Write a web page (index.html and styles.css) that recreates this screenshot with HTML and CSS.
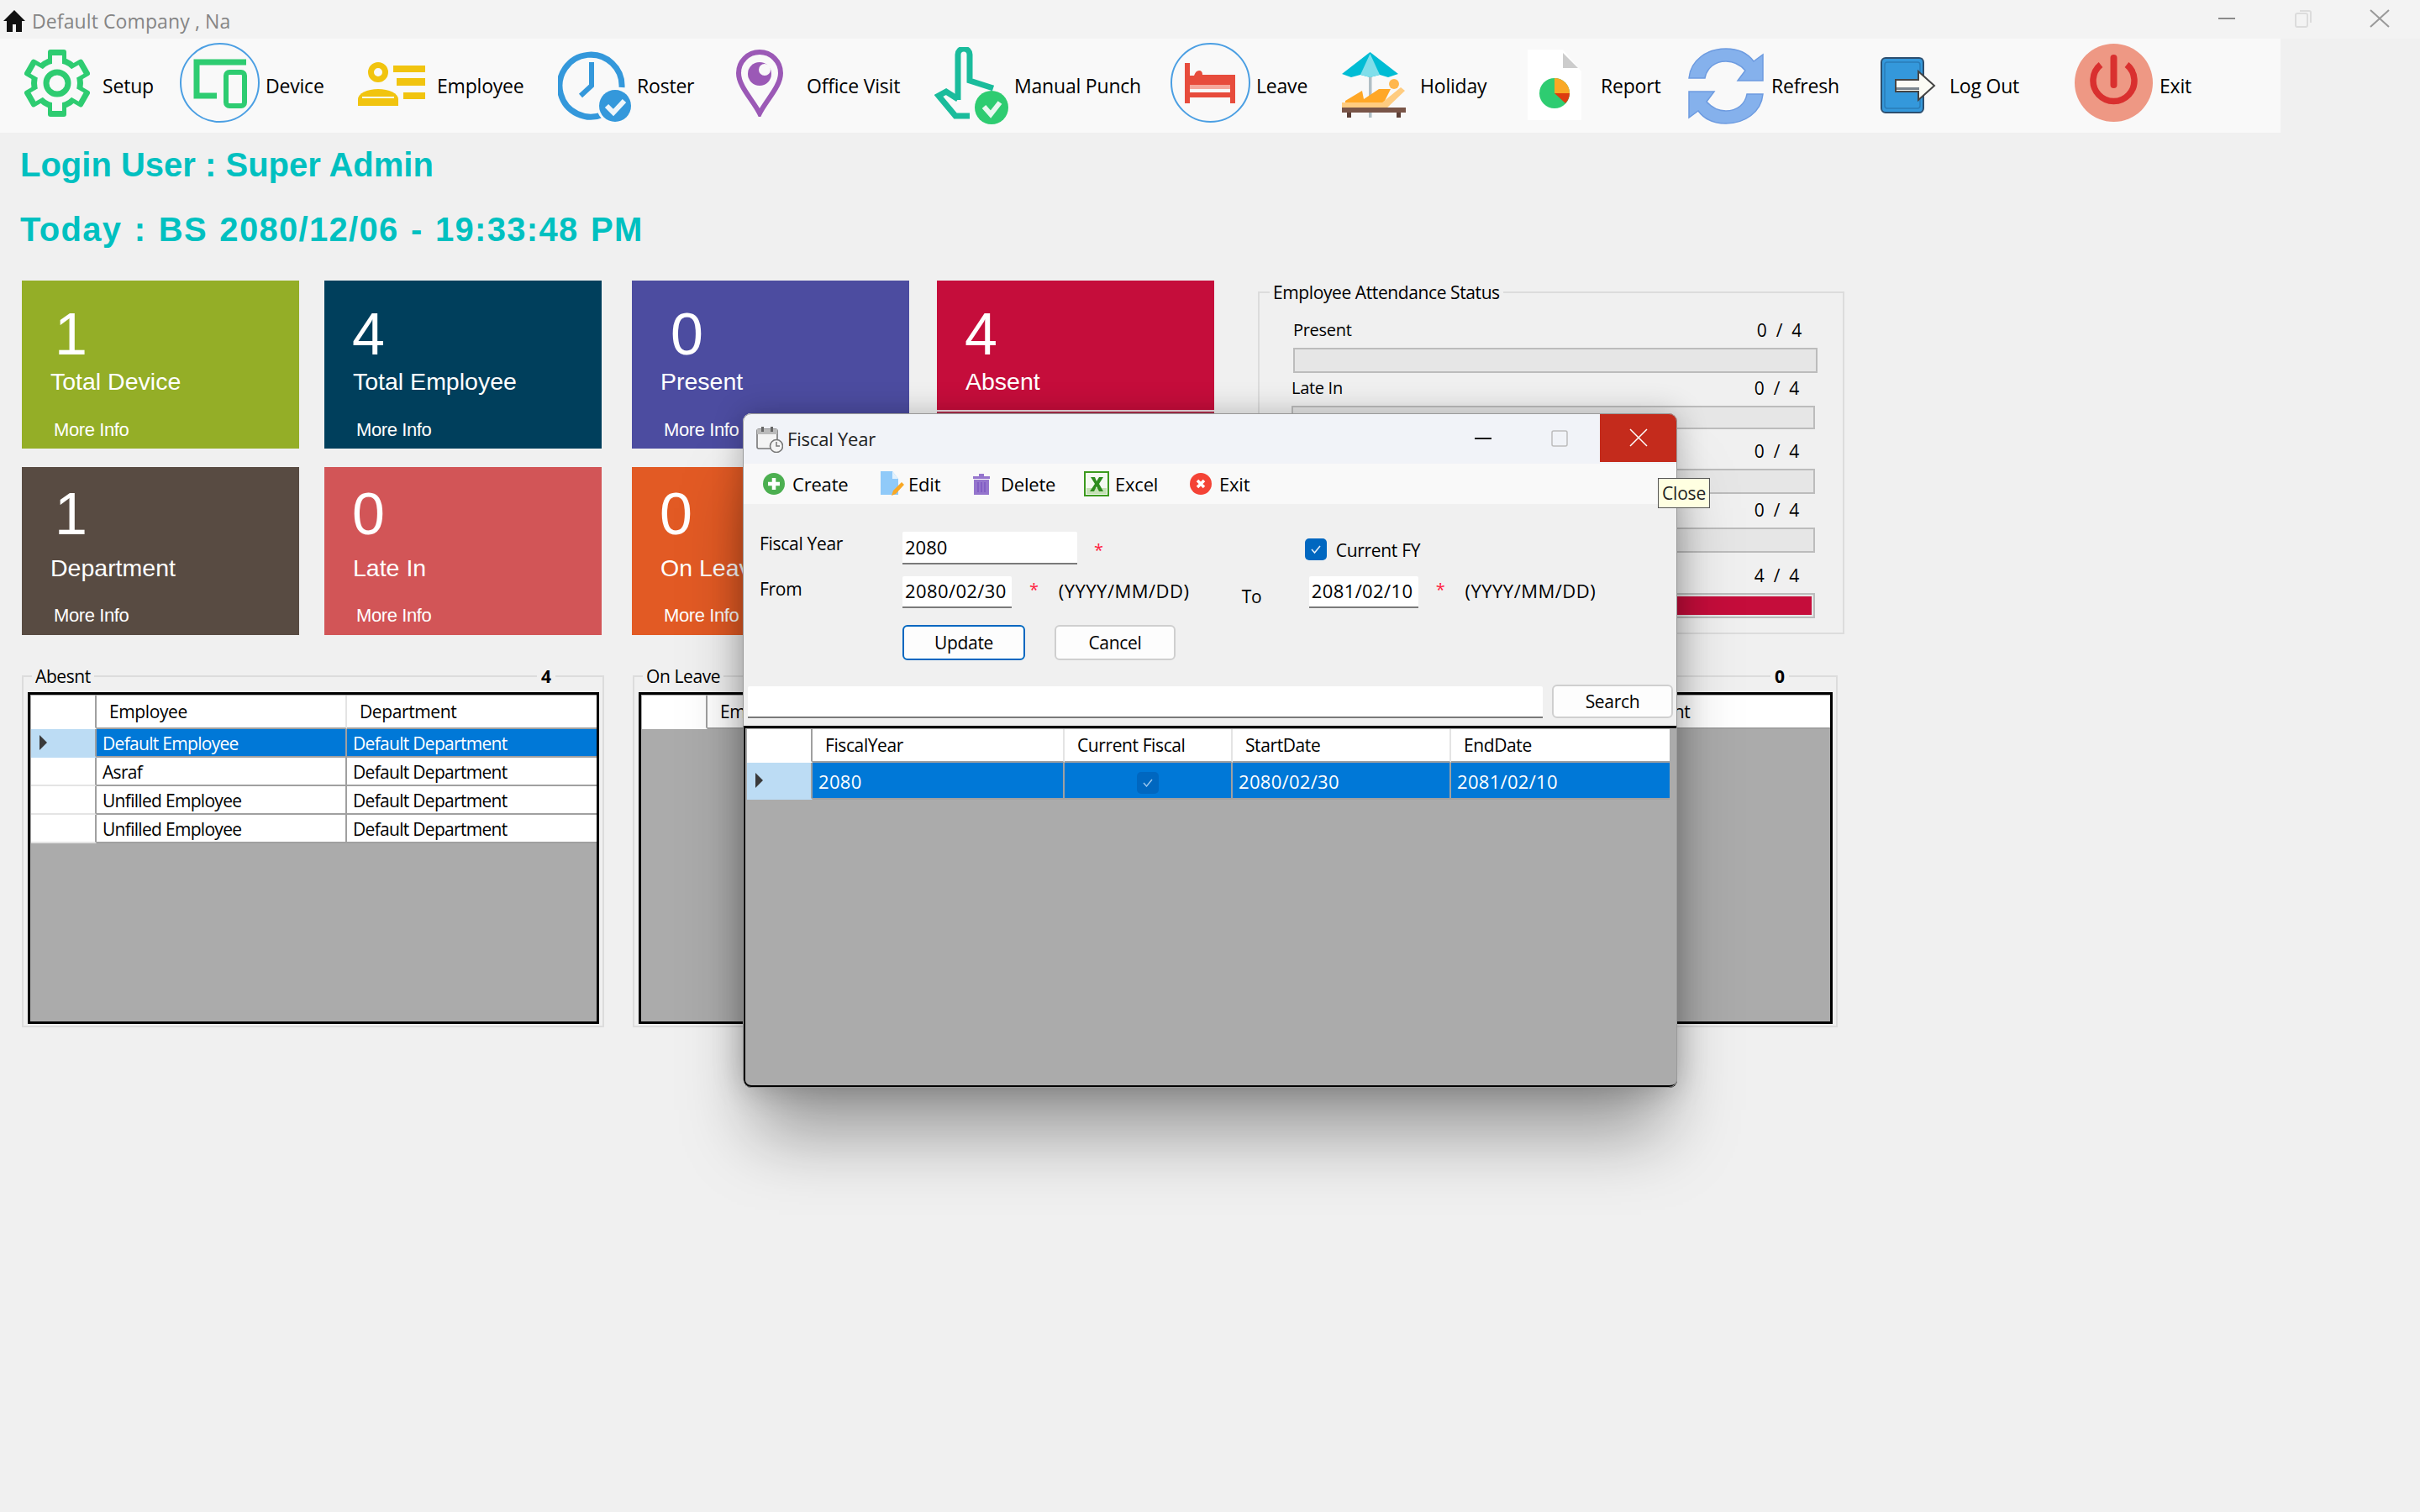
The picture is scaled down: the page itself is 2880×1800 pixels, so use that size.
FILE: index.html
```html
<!DOCTYPE html>
<html lang="en">
<head>
<meta charset="utf-8">
<title>Fiscal Year</title>
<link rel="stylesheet" href="styles.css">
</head>
<body>
<div class="app">
  <header class="titlebar">
    <svg class="home" viewBox="0 0 26 26"><path d="M13 0 L26 13 H22 V26 H15 V17 H11 V26 H4 V13 H0 Z" fill="#111"/></svg>
    <span class="app-title">Default Company , Na</span>
    <span class="win-controls">
      <svg class="wc" viewBox="0 0 24 24"><rect x="2" y="11" width="20" height="2" fill="#8a8a8a"/></svg>
      <svg class="wc" viewBox="0 0 24 24"><rect x="3" y="6" width="14" height="16" rx="2" fill="none" stroke="#dcdcdc" stroke-width="2"/><path d="M8 3 H19 Q21 3 21 5 V17" fill="none" stroke="#dcdcdc" stroke-width="2"/></svg>
      <svg class="wc" viewBox="0 0 24 24"><path d="M1 2 L23 22 M23 2 L1 22" stroke="#999" stroke-width="2"/></svg>
    </span>
  </header>

  <nav class="toolbar">
    <div class="tb tb-setup">
      <svg width="78" height="80" viewBox="0 0 78 80">
        <g fill="#2ecc71">
          <rect x="28" y="0" width="22" height="80" rx="3"/>
          <rect x="28" y="0" width="22" height="80" rx="3" transform="rotate(60 39 40)"/>
          <rect x="28" y="0" width="22" height="80" rx="3" transform="rotate(120 39 40)"/>
          <circle cx="39" cy="40" r="31"/>
        </g>
        <g fill="#f9f9f9">
          <rect x="33" y="7" width="12" height="66"/>
          <rect x="33" y="7" width="12" height="66" transform="rotate(60 39 40)"/>
          <rect x="33" y="7" width="12" height="66" transform="rotate(120 39 40)"/>
          <circle cx="39" cy="40" r="24"/>
        </g>
        <circle cx="39" cy="40" r="13" fill="none" stroke="#2ecc71" stroke-width="7"/>
      </svg>
      <span>Setup</span>
    </div>
    <div class="tb tb-device">
      <svg width="95" height="95" viewBox="0 0 95 95">
        <circle cx="47.500" cy="47.500" r="46.500" fill="none" stroke="#4b9fe3" stroke-width="2"/>
        <path d="M79 23 H20 V63 H44" fill="none" stroke="#2ecc71" stroke-width="7"/>
        <rect x="55" y="35" width="22" height="40" rx="4" fill="none" stroke="#2ecc71" stroke-width="6"/>
      </svg>
      <span>Device</span>
    </div>
    <div class="tb tb-employee">
      <svg width="80" height="52" viewBox="0 0 80 52">
        <circle cx="24" cy="12" r="8.500" fill="none" stroke="#f1c40f" stroke-width="7"/>
        <path d="M0 52 V44 A24 12 0 0 1 48 44 V52 Z" fill="#f1c40f"/>
        <rect x="5" y="41" width="38" height="2" fill="#f9f9f9"/>
        <rect x="42" y="4" width="38" height="8" fill="#f1c40f"/>
        <rect x="46" y="19" width="34" height="9" fill="#f1c40f"/>
        <rect x="54" y="36" width="26" height="8" fill="#f1c40f"/>
      </svg>
      <span>Employee</span>
    </div>
    <div class="tb tb-roster">
      <svg width="88" height="89" viewBox="0 0 88 89">
        <path d="M54 78 A37 37 0 1 1 76 46" fill="none" stroke="#3498db" stroke-width="7"/>
        <path d="M40 16 V44 L27 56" fill="none" stroke="#3498db" stroke-width="6"/>
        <circle cx="68" cy="68" r="22" fill="#f9f9f9"/>
        <circle cx="68" cy="68" r="19" fill="#3498db"/>
        <path d="M58 68 L66 76 L79 62" fill="none" stroke="#eef6fb" stroke-width="6"/>
      </svg>
      <span>Roster</span>
    </div>
    <div class="tb tb-visit">
      <svg width="56" height="80" viewBox="0 0 56 80">
        <path d="M28 76 C20 60 3 44 3 28 A25 25 0 0 1 53 28 C53 44 36 60 28 76 Z" fill="none" stroke="#9b59b6" stroke-width="6"/>
        <circle cx="28" cy="29" r="14" fill="#9b59b6"/>
        <circle cx="34" cy="24" r="7" fill="#f9f9f9"/>
      </svg>
      <span>Office Visit</span>
    </div>
    <div class="tb tb-punch">
      <svg width="88" height="92" viewBox="0 0 88 92">
        <path d="M28 63 V9 A7 7 0 0 1 42 9 V40 L70 49" fill="none" stroke="#1abc9c" stroke-width="7"/>
        <path d="M28 62 L14 53 L5 58 L25 82 H42" fill="none" stroke="#1abc9c" stroke-width="7"/>
        <circle cx="68" cy="72" r="20" fill="#2ecc71"/>
        <path d="M59 71 L67 80 L78 66" fill="none" stroke="#e8f8ef" stroke-width="6"/>
      </svg>
      <span>Manual Punch</span>
    </div>
    <div class="tb tb-leave">
      <svg width="95" height="95" viewBox="0 0 95 95">
        <circle cx="47.500" cy="47.500" r="46.500" fill="none" stroke="#4b9fe3" stroke-width="2"/>
        <g fill="#e74c3c">
          <rect x="17" y="24" width="6" height="48"/>
          <rect x="71" y="38" width="6" height="34"/>
          <rect x="17" y="59" width="60" height="6"/>
          <path d="M23 39 H28 Q30 33 34 33 Q38 33 38 38 H71 V51 H23 Z"/>
        </g>
        <rect x="23" y="50" width="48" height="5" fill="#f5a89c"/>
      </svg>
      <span>Leave</span>
    </div>
    <div class="tb tb-holiday">
      <svg width="76" height="78" viewBox="0 0 76 78">
        <rect x="32" y="24" width="3.500" height="54" fill="#b0bec5"/>
        <path d="M33.500 0 L67 26 L55 30 L45 27 L33.500 30 L22 27 L11 30 L0 26 Z" fill="#00bcd4"/>
        <path d="M33.500 2 L45 27 L33.500 30 L22 27 Z" fill="#80deea"/>
        <circle cx="62" cy="38" r="6" fill="#ffb74d"/>
        <path d="M4 58 L24 46 L26 56 L44 44 L58 44 L50 60 H4 Z" fill="#ffa726"/>
        <path d="M0 60 H48 L70 42 L75 46 L52 68 H0 Z" fill="#ffcc80"/>
        <rect x="0" y="66" width="76" height="6" fill="#795548"/>
        <rect x="6" y="72" width="5" height="7" fill="#5d4037"/>
        <rect x="65" y="72" width="5" height="7" fill="#5d4037"/>
      </svg>
      <span>Holiday</span>
    </div>
    <div class="tb tb-report">
      <svg width="64" height="84" viewBox="0 0 64 84">
        <path d="M0 0 H42 L64 26 V84 H0 Z" fill="#fff"/>
        <path d="M42 4 L60 22 H42 Z" fill="#ccc"/>
        <circle cx="32" cy="52" r="18" fill="#2ecc71"/>
        <path d="M32 34 A18 18 0 0 1 50 52 H32 Z" fill="#f9a825"/>
        <path d="M32 52 H50 A18 18 0 0 1 45 64 Z" fill="#dd3c10"/>
      </svg>
      <span>Report</span>
    </div>
    <div class="tb tb-refresh">
      <svg width="92" height="91" viewBox="0 0 92 91">
        <path d="M2 36 C4 14 24 1 46 1 C60 1 71 5 79 16 L90 8 V39 H60 L69 27 C63 20 55 16 46 16 C33 16 23 24 21 36 Z" fill="#85b1ec" stroke="#6d9be0" stroke-width="1.500"/>
        <path d="M2 36 C4 14 24 1 46 1 C60 1 71 5 79 16 L90 8 V39 H60 L69 27 C63 20 55 16 46 16 C33 16 23 24 21 36 Z" fill="#85b1ec" stroke="#6d9be0" stroke-width="1.500" transform="rotate(180 46 45.500)"/>
      </svg>
      <span>Refresh</span>
    </div>
    <div class="tb tb-logout">
      <svg width="66" height="67" viewBox="0 0 66 67">
        <rect x="1" y="1" width="50" height="65" rx="5" fill="#3498db" stroke="#2c4f70" stroke-width="2"/>
        <rect x="5" y="6" width="42" height="55" rx="3" fill="none" stroke="#2a7cb8" stroke-width="1.500"/>
        <path d="M18 27 H45 V17 L64 34 L45 51 V41 H18 Z" fill="#fbfbf4" stroke="#444" stroke-width="2"/>
        <rect x="19" y="36" width="27" height="3" fill="#7a858d"/>
      </svg>
      <span>Log Out</span>
    </div>
    <div class="tb tb-exit">
      <svg width="93" height="95" viewBox="0 0 93 95">
        <circle cx="46.500" cy="47.500" r="46.500" fill="#ee9884"/>
        <path d="M31 26 A24.500 24.500 0 1 0 62 26" fill="none" stroke="#d9302f" stroke-width="7.500"/>
        <path d="M46.500 18 V50" stroke="#d9302f" stroke-width="8" stroke-linecap="round"/>
      </svg>
      <span>Exit</span>
    </div>
  </nav>

  <h1 class="headline headline-user">Login User : Super Admin</h1>
  <h2 class="headline headline-today">Today : BS 2080/12/06 - 19:33:48 PM</h2>

  <section class="dashboard">
    <div class="cards">
      <article class="card c-olive"><b class="num num-one">1</b><span class="lbl">Total Device</span><a class="more">More Info</a></article>
      <article class="card c-navy"><b class="num">4</b><span class="lbl">Total Employee</span><a class="more">More Info</a></article>
      <article class="card c-purple"><b class="num num-in">0</b><span class="lbl">Present</span><a class="more">More Info</a></article>
      <article class="card c-crimson"><b class="num">4</b><span class="lbl">Absent</span></article>
      <article class="card low c-brown"><b class="num num-one">1</b><span class="lbl">Department</span><a class="more">More Info</a></article>
      <article class="card low c-coral"><b class="num">0</b><span class="lbl">Late In</span><a class="more">More Info</a></article>
      <article class="card low c-orange"><b class="num">0</b><span class="lbl">On Leave</span><a class="more">More Info</a></article>
      <article class="card low c-teal"></article>
    </div>
    <fieldset class="status">
      <legend>Employee Attendance Status</legend>
      <div class="st-row"><div class="st-head"><span>Present</span><span class="st-val">0 / 4</span></div><div class="bar"></div></div>
      <div class="st-row"><div class="st-head"><span>Late In</span><span class="st-val">0 / 4</span></div><div class="bar"></div></div>
      <div class="st-row"><div class="st-head"><span></span><span class="st-val">0 / 4</span></div><div class="bar"></div></div>
      <div class="st-row"><div class="st-head"><span></span><span class="st-val">0 / 4</span></div><div class="bar"></div></div>
      <div class="st-row"><div class="st-head"><span></span><span class="st-val">4 / 4</span></div><div class="bar"><div class="fill"></div></div></div>
    </fieldset>
  </section>

  <section class="lists">
    <fieldset class="list">
      <legend>Abesnt</legend><strong class="count">4</strong>
      <div class="grid">
        <table>
          <colgroup><col class="w-rh"><col class="w-a"><col class="w-b"></colgroup>
          <thead><tr><th class="rh"></th><th>Employee</th><th>Department</th></tr></thead>
          <tbody>
            <tr class="sel"><td class="rh"><i class="caret"></i></td><td>Default Employee</td><td>Default Department</td></tr>
            <tr><td class="rh"></td><td>Asraf</td><td>Default Department</td></tr>
            <tr><td class="rh"></td><td>Unfilled Employee</td><td>Default Department</td></tr>
            <tr><td class="rh"></td><td>Unfilled Employee</td><td>Default Department</td></tr>
          </tbody>
        </table>
      </div>
    </fieldset>
    <fieldset class="list">
      <legend>On Leave</legend>
      <div class="grid">
        <table>
          <colgroup><col class="w-rh"><col class="w-a"><col class="w-b"></colgroup>
          <thead><tr><th class="rh"></th><th>Employee</th><th></th></tr></thead>
        </table>
      </div>
    </fieldset>
    <fieldset class="list">
      <legend>&nbsp;</legend><strong class="count">0</strong>
      <div class="grid">
        <table>
          <colgroup><col class="w-rh"><col class="w-a"><col class="w-b"></colgroup>
          <thead><tr><th class="rh"></th><th></th><th>Department</th></tr></thead>
        </table>
      </div>
    </fieldset>
  </section>
</div>

<div class="dialog">
  <header class="dlg-title">
    <svg class="dlg-icon" width="32" height="32" viewBox="0 0 32 32">
      <rect x="1" y="4" width="24" height="23" rx="2" fill="#f4f4f4" stroke="#777" stroke-width="1.600"/>
      <rect x="1" y="4" width="24" height="6" fill="#bbb"/>
      <rect x="6" y="1" width="3" height="6" fill="#666"/><rect x="17" y="1" width="3" height="6" fill="#666"/>
      <circle cx="24" cy="24" r="7.500" fill="#f4f4f4" stroke="#777" stroke-width="1.600"/>
      <path d="M24 19 V24 H28" fill="none" stroke="#777" stroke-width="1.500"/>
    </svg>
    <span class="dlg-name">Fiscal Year</span>
    <svg class="dlg-min" width="20" height="4" viewBox="0 0 20 4"><rect y="1" width="20" height="2" fill="#111"/></svg>
    <svg class="dlg-max" width="20" height="20" viewBox="0 0 20 20"><rect x="1" y="1" width="18" height="18" rx="2" fill="none" stroke="#bdbdbd" stroke-width="1.500"/></svg>
    <span class="dlg-close"><svg width="24" height="22" viewBox="0 0 24 22"><path d="M2 1 L22 21 M22 1 L2 21" stroke="#fff" stroke-width="1.500"/></svg></span>
  </header>
  <nav class="dlg-tools">
    <span class="dt dt-create"><svg width="26" height="26" viewBox="0 0 26 26"><circle cx="13" cy="13" r="13" fill="#4caf50"/><path d="M13 6 V20 M6 13 H20" stroke="#fff" stroke-width="4.500"/></svg>Create</span>
    <span class="dt dt-edit"><svg width="28" height="30" viewBox="0 0 28 30"><path d="M0 0 H14 L21 9 V28 H0 Z" fill="#90caf9"/><path d="M14 0 L21 9 H14 Z" fill="#e3f2fd"/><path d="M13 29 L15 23 L25 13 L28 16 L18 27 Z" fill="#f9a825"/></svg>Edit</span>
    <span class="dt dt-delete"><svg width="20" height="26" viewBox="0 0 20 26"><path d="M0 4 H7 V1 H13 V4 H20 V7 H0 Z" fill="#9575cd"/><path d="M1 8 H19 V26 H1 Z" fill="#9575cd"/><path d="M6 11 V23 M10 11 V23 M14 11 V23" stroke="#7e57c2" stroke-width="1.500"/></svg>Delete</span>
    <span class="dt dt-excel"><svg width="30" height="30" viewBox="0 0 30 30"><rect x="1" y="1" width="28" height="28" fill="#f4f9f1" stroke="#3c9a1e" stroke-width="2"/><rect x="3" y="20" width="24" height="7" fill="#c5e1b5"/><path d="M8 7 H13 L15 12 L18 7 H23 L18 15 L23 24 H18 L15 18 L12 24 H7 L13 15 Z" fill="#2e8b1e"/></svg>Excel</span>
    <span class="dt dt-exit"><svg width="26" height="26" viewBox="0 0 26 26"><circle cx="13" cy="13" r="13" fill="#f44336"/><path d="M9 9 L17 17 M17 9 L9 17" stroke="#fff" stroke-width="3.500"/></svg>Exit</span>
  </nav>
  <form class="dlg-form">
    <div class="f-row f-row1">
      <label class="f-label">Fiscal Year</label>
      <div class="txt txt-wide">2080</div>
      <span class="star star1">*</span>
      <span class="chk"><svg width="14" height="12" viewBox="0 0 14 12"><path d="M2 6 L5.500 10 L12 2" fill="none" stroke="#e6f0fa" stroke-width="1.500"/></svg></span>
      <span class="chk-label">Current FY</span>
    </div>
    <div class="f-row f-row2">
      <label class="f-label">From</label>
      <div class="txt txt-date">2080/02/30</div>
      <span class="star star2">*</span>
      <span class="fmt">(YYYY/MM/DD)</span>
      <span class="to">To</span>
      <div class="txt txt-date">2081/02/10</div>
      <span class="star star2">*</span>
      <span class="fmt">(YYYY/MM/DD)</span>
    </div>
    <div class="f-row f-row3">
      <button type="button" class="btn btn-primary">Update</button>
      <button type="button" class="btn btn-plain">Cancel</button>
    </div>
    <div class="f-search">
      <div class="txt txt-search"></div>
      <button type="button" class="btn btn-search">Search</button>
    </div>
  </form>
  <div class="grid grid-dlg">
    <table>
      <colgroup><col class="d-rh"><col class="d-a"><col class="d-b"><col class="d-c"><col class="d-d"></colgroup>
      <thead><tr><th class="rh"></th><th>FiscalYear</th><th>Current Fiscal</th><th>StartDate</th><th>EndDate</th></tr></thead>
      <tbody>
        <tr class="sel"><td class="rh"><i class="caret"></i></td><td>2080</td><td class="mid"><span class="cell-chk"><svg width="12" height="10" viewBox="0 0 12 10"><path d="M1 5 L4.500 9 L11 1" fill="none" stroke="#9cc8ee" stroke-width="1.400"/></svg></span></td><td>2080/02/30</td><td>2081/02/10</td></tr>
      </tbody>
    </table>
  </div>
</div>
<div class="tooltip">Close</div>
</body>
</html>
```
FILE: styles.css
```css
* { box-sizing: border-box; }
html, body { margin: 0; height: 1800px; overflow: hidden; }
body { position: relative; background: #f0f0f0; color: #000; font-family: "Open Sans", "Noto Sans", sans-serif; font-size: 21px; }
.app { display: flex; flex-direction: column; height: 1800px; }

.titlebar { flex: none; height: 46px; background: #f3f3f3; display: flex; align-items: center; padding-left: 4px; }
.home { width: 26px; height: 26px; margin-top: 4px; }
.app-title { margin-left: 8px; color: #858585; font-size: 23px; margin-top: 4px; letter-spacing: .1px; }
.win-controls { margin-left: auto; margin-right: 36px; display: flex; gap: 67px; margin-top: -2px; }
.wc { width: 24px; height: 24px; }

.toolbar { flex: none; width: 2714px; height: 112px; background: #f9f9f9; display: flex; align-items: center; padding-left: 29px; }
.tb { display: flex; align-items: center; flex: none; font-size: 23px; letter-spacing: -.2px; }
.tb span { display: block; }
.tb-setup { width: 185px; } .tb-setup svg { margin-top: -6px; } .tb-setup span { margin-left: 15px; }
.tb-device { width: 212px; } .tb-device svg { margin-top: -7px; } .tb-device span { margin-left: 7px; }
.tb-employee { width: 238px; } .tb-employee svg { margin-top: -5px; } .tb-employee span { margin-left: 14px; }
.tb-roster { width: 212px; } .tb-roster span { margin-left: 6px; }
.tb-visit { width: 236px; } .tb-visit svg { margin-top: -6px; } .tb-visit span { margin-left: 28px; }
.tb-punch { width: 281px; } .tb-punch span { margin-left: 7px; }
.tb-leave { width: 204px; } .tb-leave svg { margin-top: -7px; } .tb-leave span { margin-left: 7px; }
.tb-holiday { width: 221px; } .tb-holiday svg { margin-top: -3px; } .tb-holiday span { margin-left: 17px; }
.tb-report { width: 190px; } .tb-report svg { margin-top: -2px; } .tb-report span { margin-left: 23px; }
.tb-refresh { width: 230px; } .tb-refresh svg { margin-top: 1px; } .tb-refresh span { margin-left: 8px; }
.tb-logout { width: 231px; } .tb-logout svg { margin-top: -1px; } .tb-logout span { margin-left: 16px; }
.tb-exit svg { margin-top: -7px; } .tb-exit span { margin-left: 8px; }

.headline { margin: 0; padding-left: 24px; font-family: "Liberation Sans", Arial, sans-serif; font-weight: 700; font-size: 40px; line-height: 48px; color: #00c0c0; }
.headline-user { margin-top: 14px; }
.headline-today { margin-top: 29px; letter-spacing: 1.3px; word-spacing: 2px; }

.dashboard { flex: none; display: flex; margin: 37px 0 0 26px; }
.cards { display: grid; grid-template-columns: repeat(4, 330px); grid-auto-rows: 200px; column-gap: 33px; row-gap: 22px; }
.card { display: flex; flex-direction: column; color: #fff; font-family: "Liberation Sans", Arial, sans-serif; padding-left: 34px; }
.cards .card:nth-child(2), .cards .card:nth-child(6) { margin-left: -3px; margin-right: 3px; }
.num { font-weight: 400; font-size: 70px; line-height: 70px; margin-top: 29px; margin-left: -1px; }
.low .num { margin-top: 21px; }
.num-one { margin-left: 5px; }
.num-in { margin-left: 12px; }
.lbl { font-size: 28.500px; line-height: 34px; margin-top: 4px; height: 34px; }
.low .lbl { margin-top: 12px; }
.more { font-size: 22px; line-height: 26px; margin-top: 28px; margin-left: 4px; letter-spacing: -.4px; }
.low .more { margin-top: 27px; }
.c-olive { background: #94ae27; }
.c-navy { background: #003f5c; }
.c-purple { background: #4c4ca0; }
.c-crimson { background: linear-gradient(#c50d3b 154px, #f0d8df 154px, #f0d8df 156px, #b0304f 156px); }
.c-brown { background: #584b42; }
.c-coral { background: #d25557; }
.c-orange { background: #e25a24; }
.c-teal { background: #1a8f8a; }

fieldset { margin: 0; border: 2px solid #dcdcdc; min-width: 0; }
legend { padding: 0 4px; line-height: 28px; font-size: 21px; letter-spacing: -.4px; }

.status { width: 698px; height: 421px; margin: 0 0 0 52px; padding: 16px 30px 0 40px; }
.status legend { margin-left: -28px; }
.st-head { display: flex; justify-content: space-between; padding-right: 19px; line-height: 30px; letter-spacing: -.3px; font-size: 20px; }
.st-val { font-size: 21px; word-spacing: 6px; }
.bar { height: 30px; margin-top: 6px; border: 2px solid #bcbcbc; background: #e6e6e6; padding: 2px; }
.fill { height: 100%; background: #c50d3b; }
.st-row:nth-child(3) { margin: 3px 3px 0 -2px; }
.st-row:nth-child(3) .bar { height: 28px; }
.st-row:nth-child(4) { margin: 11px 3px 0 -2px; }
.st-row:nth-child(5) { margin: 4px 3px 0 -2px; }
.st-row:nth-child(6) { margin: 12px 3px 0 -2px; }

.lists { flex: none; display: flex; margin: 35px 0 0 26px; }
.list { position: relative; width: 693px; height: 432px; padding: 5px 4px 2px 5px; }
.list:nth-child(2) { margin-left: 34px; }
.list:nth-child(3) { margin-left: 48px; }
.list legend { margin-left: 5px; }
.count { position: absolute; right: 56px; top: -28px; padding: 0 5px; line-height: 28px; background: #f0f0f0; font-size: 21px; }

.grid { height: 395px; background: #ababab; border: 3px solid #000; padding: 1px 0 0 1px; overflow: hidden; }
table { border-collapse: separate; border-spacing: 0; table-layout: fixed; }
.w-rh { width: 78px; } .w-a { width: 298px; } .w-b { width: 297px; }
th, td { padding: 0; font-weight: 400; text-align: left; font-size: 21px; letter-spacing: -.7px; background: #fff; white-space: nowrap; overflow: hidden; }
th { height: 40px; padding-left: 15px; border-right: 2px solid #e4e4e4; border-bottom: 2px solid #a0a0a0; letter-spacing: -.4px; }
td { height: 34px; padding: 1px 0 0 7px; border-right: 2px solid #a0a0a0; border-bottom: 2px solid #a0a0a0; }
th:last-child, td:last-child { border-right: 0; }
.rh { padding: 0; border-right: 2px solid #a0a0a0; border-bottom: 2px solid #e4e4e4; }
th.rh { border-bottom-color: #fff; }
.sel td { background: #0078d7; color: #fff; }
.sel td.rh { background: #bcdcf4; border-bottom-color: #bcdcf4; }
.caret { display: block; width: 0; height: 0; margin-left: 10px; border-left: 9px solid #3a3a3a; border-top: 9px solid transparent; border-bottom: 9px solid transparent; }

.dialog { position: absolute; left: 884px; top: 492px; width: 1112px; height: 803px; display: flex; flex-direction: column; background: #f0f0f0; border-radius: 10px; outline: 1px solid #9a9a9a; outline-offset: -1px; box-shadow: 0 70px 80px -15px rgba(0,0,0,.36), 0 0 36px rgba(0,0,0,.24); }
.dlg-title { flex: none; height: 60px; background: #f1f3f8; display: flex; align-items: center; padding-left: 16px; border-radius: 10px 10px 0 0; }
.dlg-icon { margin-top: 2px; }
.dlg-name { flex: 1; margin-left: 5px; font-size: 22px; letter-spacing: -.2px; color: #222; }
.dlg-min { margin-right: 71px; }
.dlg-max { margin-right: 38px; }
.dlg-close { align-self: flex-start; width: 92px; height: 58px; background: #c42b1c; display: flex; align-items: center; justify-content: center; border-radius: 0 10px 0 0; }
.dlg-tools { flex: none; height: 48px; background: #f9f9f9; display: flex; align-items: center; padding-left: 24px; font-size: 22px; letter-spacing: -.2px; }
.dt { display: flex; align-items: center; flex: none; }
.dt-create { width: 140px; gap: 9px; }
.dt-edit { width: 110px; gap: 5px; }
.dt-delete { width: 132px; gap: 13px; }
.dt-excel { width: 126px; gap: 7px; }
.dt-exit { gap: 9px; }

.dlg-form { flex: none; height: 264px; font-size: 21px; letter-spacing: -.3px; display: flex; flex-direction: column; }
.f-row { display: flex; align-items: center; padding-left: 20px; }
.f-row1 { height: 39px; margin-top: 33px; }
.f-row2 { height: 38px; margin-top: 14px; }
.f-row3 { height: 42px; margin-top: 20px; padding-left: 190px; }
.f-label { width: 170px; flex: none; margin-top: -12px; }
.f-row2 .f-label { margin-top: -8px; }
.txt { background: #fff; border-bottom: 2px solid #7a7a7a; flex: none; padding-left: 3px; line-height: 36px; border-radius: 2px 2px 0 0; font-size: 22px; letter-spacing: .4px; }
.txt-wide { width: 208px; height: 39px; letter-spacing: 0; }
.txt-date { width: 130px; height: 38px; line-height: 34px; }
.star { color: #ff2040; font-size: 20px; flex: none; line-height: 20px; }
.star1 { margin-left: 20px; margin-top: 4px; }
.star2 { margin-left: 21px; margin-top: -6px; }
.f-row2 .fmt { margin-left: 24px; flex: none; width: 156px; margin-top: -4px; font-size: 22px; letter-spacing: .5px; }
.to { margin-left: 62px; width: 80px; flex: none; margin-top: 10px; }
.chk { margin-left: 240px; flex: none; width: 26px; height: 26px; border-radius: 5px; background: #0067c0; display: flex; align-items: center; justify-content: center; margin-top: 2px; }
.chk-label { margin-left: 11px; margin-top: 4px; }
.btn { font: inherit; letter-spacing: inherit; color: #000; background: #fdfdfd; border: 2px solid #cfcfcf; border-radius: 6px; padding: 0; }
.btn-primary { width: 146px; height: 42px; border-color: #0067c0; }
.btn-plain { width: 144px; height: 42px; margin-left: 35px; }
.f-search { display: flex; margin-top: 29px; padding-left: 6px; }
.txt-search { width: 946px; height: 38px; margin-top: 2px; }
.btn-search { width: 144px; height: 40px; margin-left: 11px; }

.grid-dlg { flex: 1; height: auto; margin: 0 0 0 1px; border-width: 3px 0 3px 2px; padding: 1px 0 0 2px; border-radius: 0 0 9px 9px; }
.d-rh { width: 78px; } .d-a { width: 300px; } .d-b { width: 200px; } .d-c { width: 260px; } .d-d { width: 260px; }
.grid-dlg td { height: 44px; font-size: 22px; letter-spacing: .3px; }
.grid-dlg td.rh { padding: 0; }
.mid { text-align: center; padding-left: 0; }
.cell-chk { display: inline-flex; width: 26px; height: 26px; border-radius: 5px; background: #0067c0; align-items: center; justify-content: center; vertical-align: middle; }

.tooltip { position: absolute; left: 1973px; top: 569px; width: 62px; height: 36px; background: #ffffe1; border: 1px solid #555; font-size: 21px; line-height: 34px; text-align: center; color: #222; letter-spacing: -.2px; }
```
